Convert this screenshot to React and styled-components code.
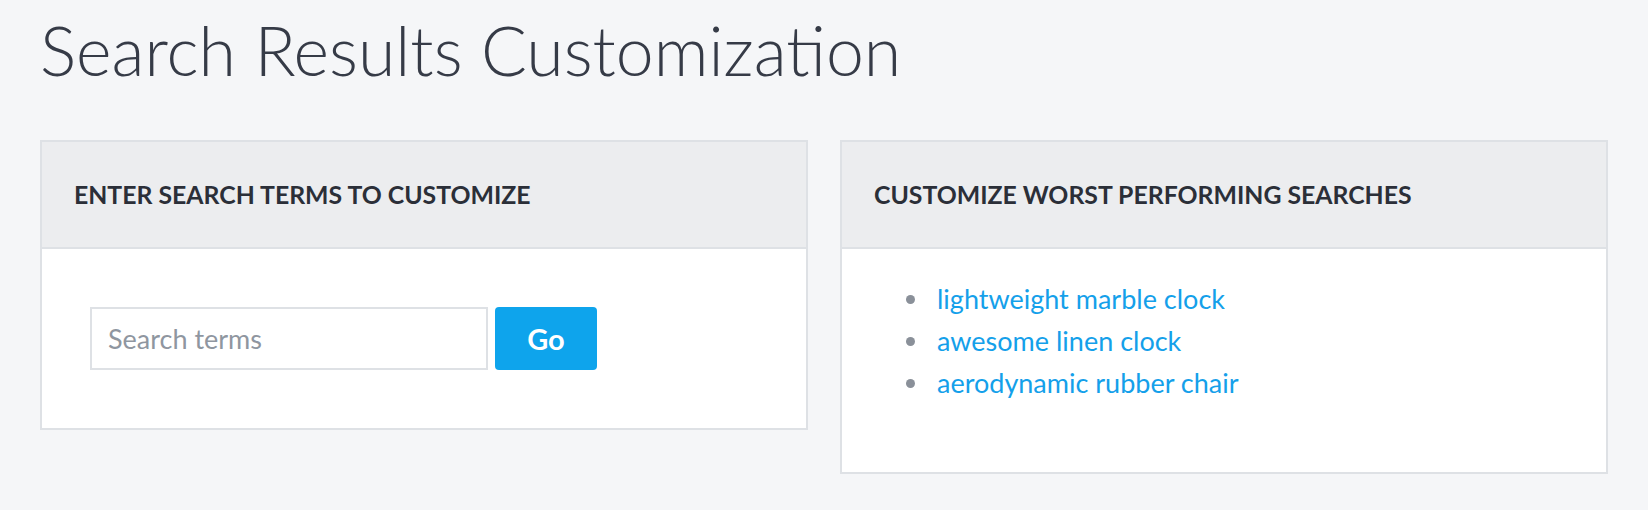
import React from 'react';
import styled, { createGlobalStyle } from 'styled-components';

const GlobalStyle = createGlobalStyle`
  html, body {
    margin: 0;
    padding: 0;
    background: #f5f6f8;
    font-family: Lato, "Noto Sans", sans-serif;
  }
`;

const Page = styled.div`
  padding: 0 40px;
`;

const Title = styled.h1`
  margin: 0;
  padding-top: 8px;
  font-size: 68px;
  font-weight: 300;
  line-height: 84px;
  color: #363b47;
`;

const Cards = styled.div`
  display: flex;
  align-items: flex-start;
  gap: 32px;
  margin-top: 48px;
`;

const Card = styled.section`
  flex: 1;
  border: 2px solid #dee1e5;
  background: #fff;
`;

const CardHeader = styled.header`
  height: 105px;
  display: flex;
  align-items: center;
  padding: 0 32px;
  background: #ecedef;
  border-bottom: 2px solid #dee1e5;
  h2 {
    margin: 0;
    font-size: 24.8px;
    font-weight: 700;
    color: #2b2f38;
    text-transform: uppercase;
  }
`;

const CardBody = styled.div`
  padding: ${(p) => p.pad};
`;

const Form = styled.form`
  display: flex;
  align-items: center;
  gap: 7px;
`;

const Input = styled.input`
  box-sizing: border-box;
  width: 398px;
  height: 63px;
  padding: 0 16px;
  border: 2px solid #dee1e5;
  font-family: inherit;
  font-size: 27px;
  color: #333;
  outline: none;
  &::placeholder {
    color: #8f96a0;
  }
`;

const Button = styled.button`
  width: 102px;
  height: 63px;
  border: none;
  border-radius: 4px;
  background: #0ea4ec;
  color: #fff;
  font-family: inherit;
  font-size: 29px;
  font-weight: 700;
  cursor: pointer;
`;

const List = styled.ul`
  margin: 0;
  padding: 0 0 0 89px;
  li {
    font-size: 27px;
    line-height: 42px;
    color: #8a9099;
    padding-left: 6px;
  }
  a {
    color: #14a0ea;
    text-decoration: none;
  }
`;

const searches = ['lightweight marble clock', 'awesome linen clock', 'aerodynamic rubber chair'];

export default function App() {
  return (
    <Page>
      <GlobalStyle />
      <Title>Search Results Customization</Title>
      <Cards>
        <Card>
          <CardHeader>
            <h2>Enter search terms to customize</h2>
          </CardHeader>
          <CardBody pad="58px 48px 58px">
            <Form onSubmit={(e) => e.preventDefault()}>
              <Input placeholder="Search terms" />
              <Button type="submit">Go</Button>
            </Form>
          </CardBody>
        </Card>
        <Card>
          <CardHeader>
            <h2>Customize worst performing searches</h2>
          </CardHeader>
          <CardBody pad="29px 0 68px">
            <List>
              {searches.map((s) => (
                <li key={s}>
                  <a href="#">{s}</a>
                </li>
              ))}
            </List>
          </CardBody>
        </Card>
      </Cards>
    </Page>
  );
}
